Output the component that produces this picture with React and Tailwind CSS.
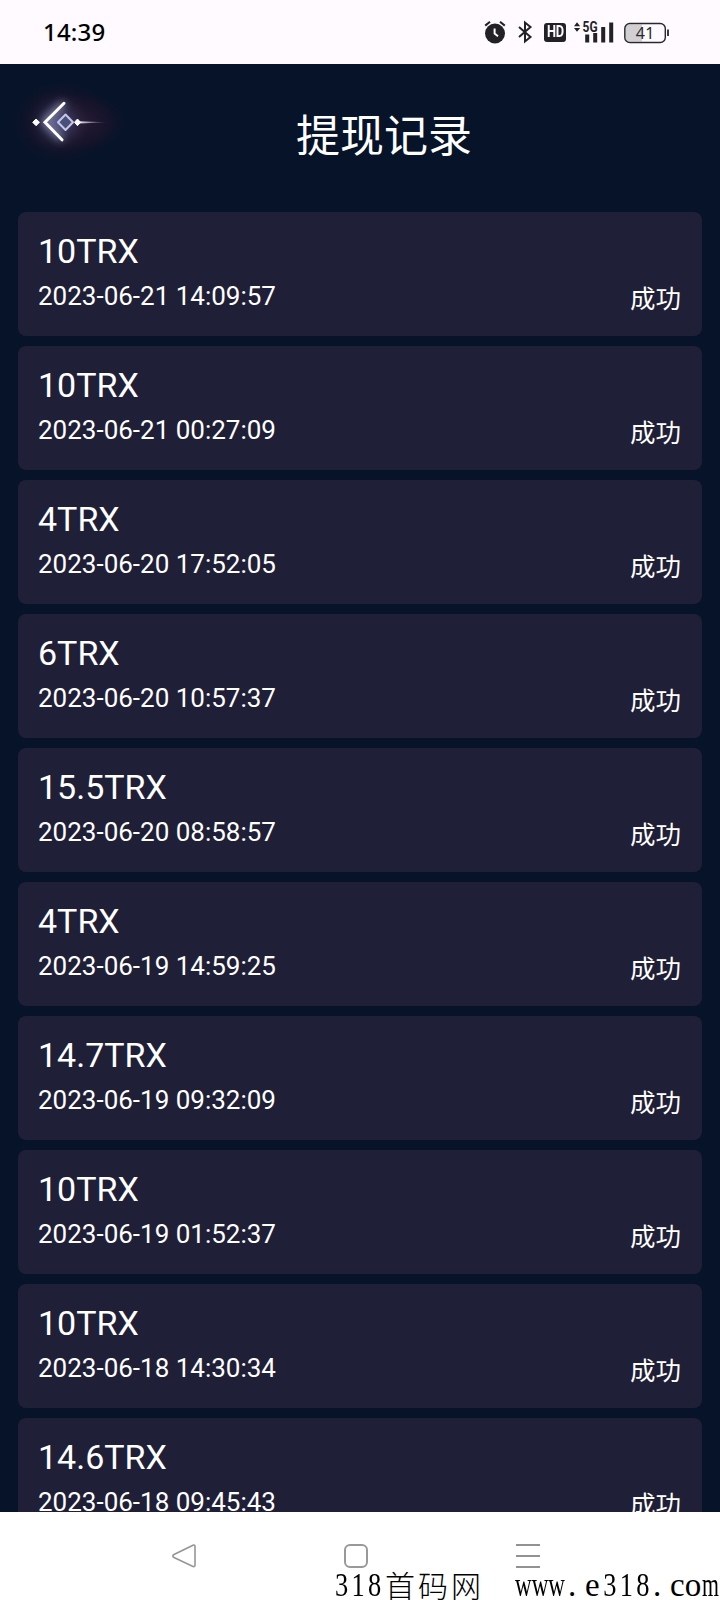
import React from "react";

const records = [
  ["10TRX", "2023-06-21 14:09:57"],
  ["10TRX", "2023-06-21 00:27:09"],
  ["4TRX", "2023-06-20 17:52:05"],
  ["6TRX", "2023-06-20 10:57:37"],
  ["15.5TRX", "2023-06-20 08:58:57"],
  ["4TRX", "2023-06-19 14:59:25"],
  ["14.7TRX", "2023-06-19 09:32:09"],
  ["10TRX", "2023-06-19 01:52:37"],
  ["10TRX", "2023-06-18 14:30:34"],
  ["14.6TRX", "2023-06-18 09:45:43"],
];

function AlarmIcon() {
  return (
    <svg className="h-6 w-[22px]" viewBox="0 0 22 24" fill="none">
      <circle cx="11" cy="13.500" r="10" fill="#222226" />
      <path d="M1.200 5.600 L6 1.700 M16 1.700 L20.800 5.600" stroke="#222226" strokeWidth="2" />
      <path d="M10.600 8.600 V13.600 L14 16.200" stroke="#fefaff" strokeWidth="2" />
    </svg>
  );
}

function BluetoothIcon() {
  return (
    <svg className="ml-[11px] h-6 w-4" viewBox="0 0 16 24" fill="none">
      <path d="M2 7 L13.500 17 L8 21.500 V2.500 L13.500 7 L2 17" stroke="#222226" strokeWidth="2" />
    </svg>
  );
}

function HdIcon() {
  return (
    <div className="ml-[11px] flex h-[19px] w-[22px] items-center justify-center rounded-[3px] bg-[#222226] font-['Roboto',sans-serif] text-[16px] leading-none font-bold tracking-[-0.5px] text-[#fefaff]">
      <span className="scale-x-[0.8]">HD</span>
    </div>
  );
}

function SignalIcon() {
  return (
    <svg className="ml-2 h-6 w-10" viewBox="0 0 40 24">
      <path d="M0 6.300 L3 2.200 L6.200 6.300Z M0 8 H6.200 L3 11.800Z" fill="#222226" />
      <text x="8.600" y="11.500" textLength="15" lengthAdjust="spacingAndGlyphs" className="font-['Roboto',sans-serif] text-[14px] font-bold" fill="#222226">5G</text>
      <path d="M11.200 14.500h4V22.500h-4z M19.200 13h4v9.500h-4z M27.200 7h4v15.500h-4z M35.200 2.500h4v20h-4z" fill="#222226" />
    </svg>
  );
}

function BatteryIcon() {
  return (
    <svg className="ml-[9px] h-6 w-[46px]" viewBox="0 0 46 24">
      <path d="M19 4.500H6.500a4.500 4.500 0 0 0-4.500 4.500v8a4.500 4.500 0 0 0 4.500 4.500H19z" fill="#d2cfd4" />
      <rect x="1.800" y="3.500" width="40.500" height="19" rx="5" fill="none" stroke="#29292d" strokeWidth="1.400" />
      <path d="M45 9.500v6.500" stroke="#29292d" strokeWidth="1.800" />
      <text x="22.300" y="18.600" textAnchor="middle" className="font-['Noto_Sans',sans-serif] text-[16px] tracking-[0.5px]" fill="#29292d">41</text>
    </svg>
  );
}

function BackIcon() {
  return (
    <svg className="h-24 w-32" viewBox="0 0 128 96" fill="none">
      <defs>
        <radialGradient id="halo">
          <stop offset="0" stopColor="#7882bd" stopOpacity=".6" />
          <stop offset=".5" stopColor="#464569" stopOpacity=".35" />
          <stop offset="1" stopColor="#20132a" stopOpacity="0" />
        </radialGradient>
        <radialGradient id="haze">
          <stop offset="0" stopColor="#2a1c36" stopOpacity=".7" />
          <stop offset=".6" stopColor="#20152c" stopOpacity=".5" />
          <stop offset="1" stopColor="#20132a" stopOpacity="0" />
        </radialGradient>
        <linearGradient id="tail" x1="77" x2="108" y1="0" y2="0" gradientUnits="userSpaceOnUse">
          <stop stopColor="#fff" />
          <stop offset="1" stopColor="#a8a9c9" stopOpacity="0" />
        </linearGradient>
        <filter id="glow" x="-50%" y="-50%" width="200%" height="200%">
          <feGaussianBlur stdDeviation="4" />
        </filter>
      </defs>
      <ellipse cx="62" cy="48" rx="50" ry="42" fill="url(#haze)" />
      <ellipse cx="84" cy="48" rx="43" ry="28" fill="url(#haze)" />
      <ellipse cx="59" cy="48" rx="34" ry="32" fill="url(#halo)" />
      <path d="M64 29 L45 48 L62 65" stroke="#c5cef5" strokeWidth="5" opacity=".7" filter="url(#glow)" />
      <path d="M80 48 H100" stroke="#8f8fae" strokeWidth="4" opacity=".5" filter="url(#glow)" />
      <path d="M64 29 L45 48 L62 65.500" transform="translate(0 .3)" stroke="#fff" strokeWidth="3" strokeLinecap="round" />
      <path d="M65.500 40.500 L73 48.200 L65.500 56 L58 48.200Z" fill="#4a5078" stroke="#c3c7ed" strokeWidth="2" strokeLinejoin="round" />
      <path d="M36 45 L39.500 48.300 L36 51.700 L32.700 48.300Z M77.500 45 L80.500 48.300 L77.500 51.700 L74.500 48.300Z" fill="#fff" stroke="#fff" strokeLinejoin="round" />
      <path d="M79 47.200 L108 48.200 L79 49.500Z" fill="url(#tail)" />
    </svg>
  );
}

export default function App() {
  return (
    <div className="flex h-[1600px] w-[720px] flex-col overflow-hidden bg-[#061329]">
      <header className="flex h-16 shrink-0 items-center bg-[#fefaff] pr-[51px] pl-[43px]">
        <time className="font-['Noto_Sans',sans-serif] text-[24px] leading-8 font-medium tracking-[0.2px] text-black">14:39</time>
        <div className="ml-auto flex items-center">
          <AlarmIcon />
          <BluetoothIcon />
          <HdIcon />
          <SignalIcon />
          <BatteryIcon />
        </div>
      </header>

      <main className="flex h-[1448px] shrink-0 flex-col overflow-hidden font-['Roboto','Noto_Sans_CJK_SC',sans-serif] text-white">
        <div className="flex h-[148px] shrink-0 pt-[10px]">
          <button aria-label="返回" className="h-24 w-32 shrink-0">
            <BackIcon />
          </button>
          <h1 className="pt-[27px] pl-[168px] font-['Noto_Sans_CJK_SC',sans-serif] text-[44px] leading-[64px]">提现记录</h1>
        </div>
        <div className="flex flex-col gap-[10px] px-[18px]">
          {records.map(([amount, date]) => (
            <article key={date} className="flex h-[124px] shrink-0 justify-between rounded-lg bg-[#201f38] pr-[21px] pl-5">
              <div className="pt-[18px]">
                <h2 className="text-[34px] leading-[42px]">{amount}</h2>
                <p className="pt-[7px] text-[26px] leading-[34px]">{date}</p>
              </div>
              <span className="pt-[67px] font-['Noto_Sans_CJK_SC',sans-serif] text-[25.500px] leading-9">成功</span>
            </article>
          ))}
        </div>
      </main>

      <footer className="flex h-[88px] shrink-0 flex-col overflow-hidden bg-white">
        <nav className="flex h-14 shrink-0 items-end pl-[171px]">
          <svg className="h-6 w-[26px]" viewBox="0 0 26 24" fill="none">
            <path d="M22 1.200 L3 10.500 Q0.500 12 3 13.500 L22 22.500 Q24 23 24 21 V2.500 Q24 .5 22 1.200Z" stroke="#969696" strokeWidth="1.600" />
          </svg>
          <span className="ml-[147px] h-6 w-6 rounded-[6px] border-2 border-[#999]" />
          <span className="ml-[148px] flex h-6 w-6 flex-col justify-between">
            <i className="h-0.5 bg-[#929292]" />
            <i className="h-0.5 bg-[#929292]" />
            <i className="h-0.5 bg-[#929292]" />
          </span>
        </nav>
        <div className="flex h-8 shrink-0 pt-px pl-[335px] font-['Liberation_Serif','Noto_Sans_CJK_SC',serif] text-[33px] leading-8 whitespace-nowrap text-black">
          <span className="w-[50px] origin-left scale-x-[0.8] tracking-[4.2px]">318</span>
          <span className="w-[130px] font-['Noto_Sans_CJK_SC',sans-serif] text-[30px] leading-[30px] font-light tracking-[3px]">首码网</span>
          <span className="w-[51px] origin-left scale-x-[0.7]">www</span>
          <span className="w-[17px] pl-0.5">.</span>
          <span className="w-[17px] pl-0.5">e</span>
          <span className="w-[51px] origin-left scale-x-[0.8] pl-1 tracking-[4.2px]">318</span>
          <span className="w-[17px] pl-0.5">.</span>
          <span className="w-[34px] pl-[2px]">co</span>
          <span className="w-[17px] origin-left scale-x-[0.66]">m</span>
        </div>
      </footer>
    </div>
  );
}
